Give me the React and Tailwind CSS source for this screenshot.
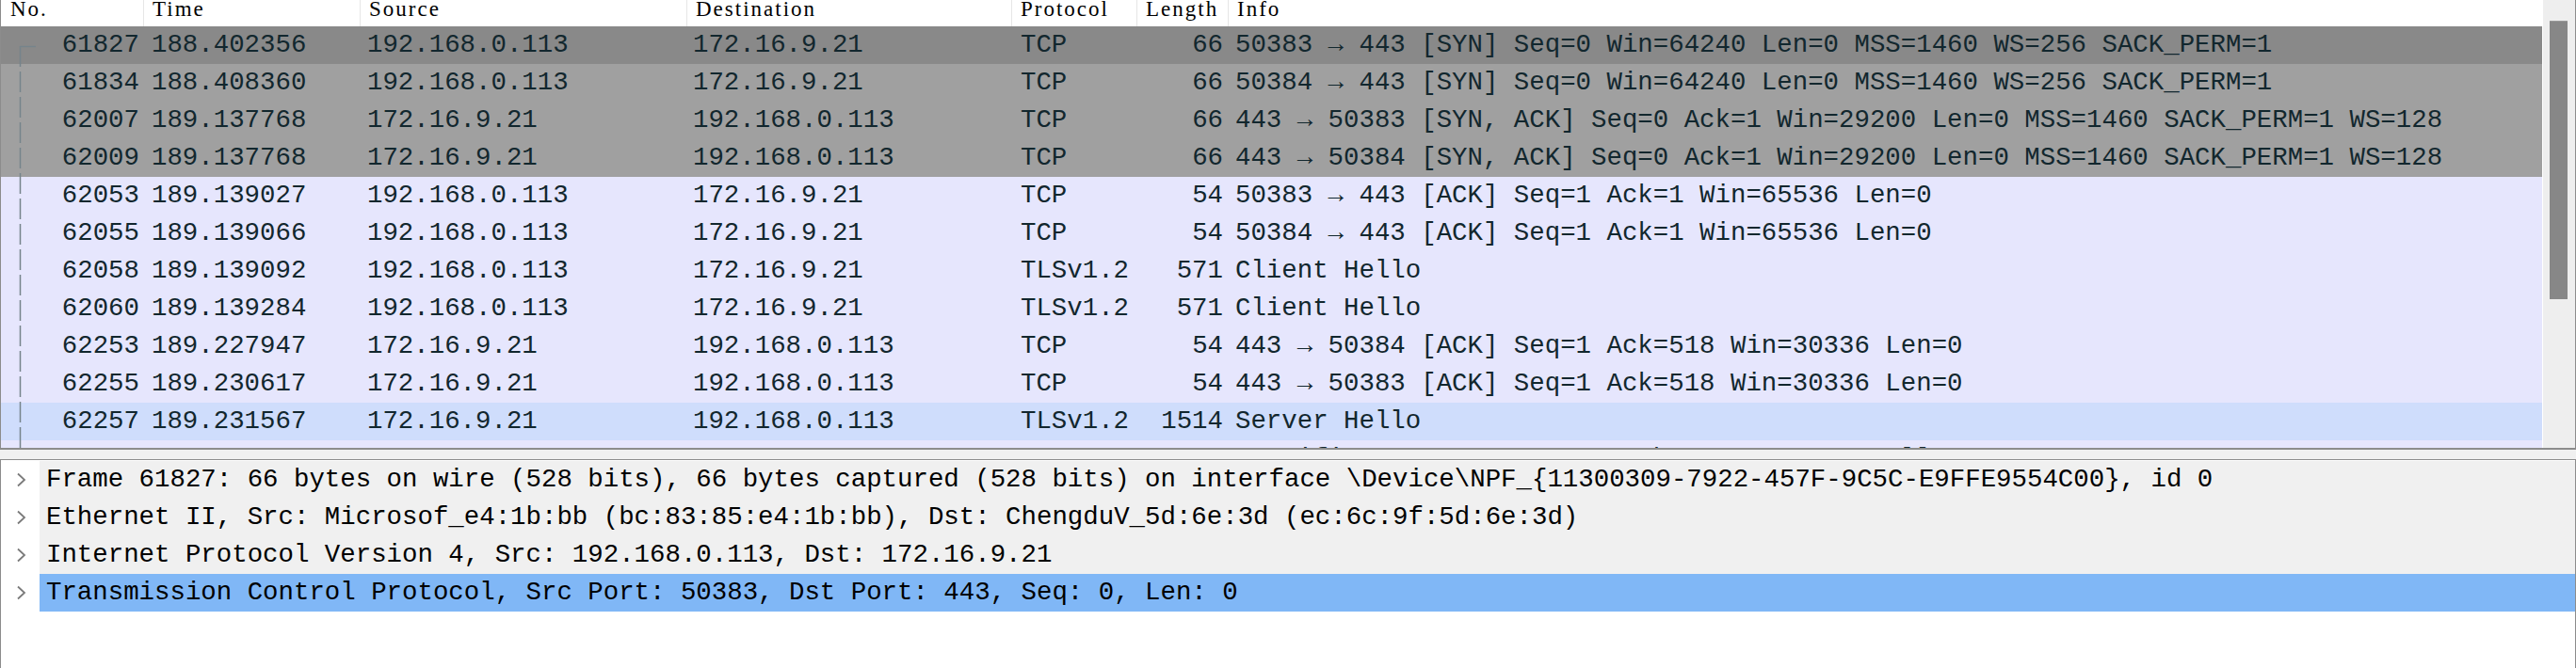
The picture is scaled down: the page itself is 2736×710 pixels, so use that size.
const MONO = "font-['Liberation_Mono',monospace] text-[27.4px]"
const SERIF = "font-['Liberation_Serif',serif] text-[23px] tracking-[2px]"

const PACKETS = [
  { no: '61827', time: '188.402356', src: '192.168.0.113', dst: '172.16.9.21', proto: 'TCP', len: '66', info: '50383 → 443 [SYN] Seq=0 Win=64240 Len=0 MSS=1460 WS=256 SACK_PERM=1', bg: 'bg-[#898989]' },
  { no: '61834', time: '188.408360', src: '192.168.0.113', dst: '172.16.9.21', proto: 'TCP', len: '66', info: '50384 → 443 [SYN] Seq=0 Win=64240 Len=0 MSS=1460 WS=256 SACK_PERM=1', bg: 'bg-[#a0a0a0]' },
  { no: '62007', time: '189.137768', src: '172.16.9.21', dst: '192.168.0.113', proto: 'TCP', len: '66', info: '443 → 50383 [SYN, ACK] Seq=0 Ack=1 Win=29200 Len=0 MSS=1460 SACK_PERM=1 WS=128', bg: 'bg-[#a0a0a0]' },
  { no: '62009', time: '189.137768', src: '172.16.9.21', dst: '192.168.0.113', proto: 'TCP', len: '66', info: '443 → 50384 [SYN, ACK] Seq=0 Ack=1 Win=29200 Len=0 MSS=1460 SACK_PERM=1 WS=128', bg: 'bg-[#a0a0a0]' },
  { no: '62053', time: '189.139027', src: '192.168.0.113', dst: '172.16.9.21', proto: 'TCP', len: '54', info: '50383 → 443 [ACK] Seq=1 Ack=1 Win=65536 Len=0', bg: 'bg-[#e6e6fd]' },
  { no: '62055', time: '189.139066', src: '192.168.0.113', dst: '172.16.9.21', proto: 'TCP', len: '54', info: '50384 → 443 [ACK] Seq=1 Ack=1 Win=65536 Len=0', bg: 'bg-[#e6e6fd]' },
  { no: '62058', time: '189.139092', src: '192.168.0.113', dst: '172.16.9.21', proto: 'TLSv1.2', len: '571', info: 'Client Hello', bg: 'bg-[#e6e6fd]' },
  { no: '62060', time: '189.139284', src: '192.168.0.113', dst: '172.16.9.21', proto: 'TLSv1.2', len: '571', info: 'Client Hello', bg: 'bg-[#e6e6fd]' },
  { no: '62253', time: '189.227947', src: '172.16.9.21', dst: '192.168.0.113', proto: 'TCP', len: '54', info: '443 → 50384 [ACK] Seq=1 Ack=518 Win=30336 Len=0', bg: 'bg-[#e6e6fd]' },
  { no: '62255', time: '189.230617', src: '172.16.9.21', dst: '192.168.0.113', proto: 'TCP', len: '54', info: '443 → 50383 [ACK] Seq=1 Ack=518 Win=30336 Len=0', bg: 'bg-[#e6e6fd]' },
  { no: '62257', time: '189.231567', src: '172.16.9.21', dst: '192.168.0.113', proto: 'TLSv1.2', len: '1514', info: 'Server Hello', bg: 'bg-[#cfddfc]' },
  { no: '62259', time: '189.231601', src: '172.16.9.21', dst: '192.168.0.113', proto: 'TLSv1.2', len: '1514', info: 'Certificate, Server Key Exchange, Server Hello Done', bg: 'bg-[#e6e6fd]' },
]

const DETAILS = [
  { text: 'Frame 61827: 66 bytes on wire (528 bits), 66 bytes captured (528 bits) on interface \\Device\\NPF_{11300309-7922-457F-9C5C-E9FFE9554C00}, id 0', bg: 'bg-[#f0f0f0]' },
  { text: 'Ethernet II, Src: Microsof_e4:1b:bb (bc:83:85:e4:1b:bb), Dst: ChengduV_5d:6e:3d (ec:6c:9f:5d:6e:3d)', bg: 'bg-[#f0f0f0]' },
  { text: 'Internet Protocol Version 4, Src: 192.168.0.113, Dst: 172.16.9.21', bg: 'bg-[#f0f0f0]' },
  { text: 'Transmission Control Protocol, Src Port: 50383, Dst Port: 443, Seq: 0, Len: 0', bg: 'bg-[#80b7f6]' },
]

function HeaderCell({ label, className }) {
  return (
    <div className={`shrink-0 h-full border-r border-[#e6e6e6] pl-[9px] leading-[20px] text-black ${className}`}>
      {label}
    </div>
  )
}

function PacketRow({ p }) {
  return (
    <div className={`flex h-[40px] shrink-0 leading-[40px] whitespace-nowrap text-[#12272e] ${p.bg}`}>
      <div className="w-[152px] shrink-0 pr-[5px] text-right">{p.no}</div>
      <div className="w-[230px] shrink-0 pl-[8px]">{p.time}</div>
      <div className="w-[347px] shrink-0 pl-[7px]">{p.src}</div>
      <div className="w-[345px] shrink-0 pl-[6px]">{p.dst}</div>
      <div className="w-[133px] shrink-0 pl-[9px]">{p.proto}</div>
      <div className="w-[97px] shrink-0 pr-[6px] text-right">{p.len}</div>
      <div className="flex-1 overflow-hidden pl-[7px]">{p.info}</div>
    </div>
  )
}

function DetailRow({ d }) {
  return (
    <div className="flex h-[40px] shrink-0">
      <div className="w-[41px] shrink-0 flex items-center pl-[16px] bg-white">
        <svg width="12" height="16" viewBox="0 0 12 16" fill="none">
          <path d="M2 1.5 L9 8 L2 14.5" stroke="#7a7a7a" strokeWidth="1.8" />
        </svg>
      </div>
      <div className={`flex-1 pl-[7px] leading-[40px] whitespace-nowrap overflow-hidden text-black ${d.bg}`}>
        {d.text}
      </div>
    </div>
  )
}

export default function App() {
  return (
    <div className={`w-[2736px] h-[710px] overflow-hidden bg-[#f0f0f0] flex flex-col ${MONO}`}>
      {/* packet list */}
      <div className="h-[478px] shrink-0 flex border-l border-r border-b-2 border-[#8c8c8c]">
        <div className="relative flex-1 flex flex-col overflow-hidden bg-white">
          <div className={`flex h-[28px] shrink-0 bg-white ${SERIF}`}>
            <HeaderCell label="No." className="w-[152px] pl-[10px]" />
            <HeaderCell label="Time" className="w-[230px]" />
            <HeaderCell label="Source" className="w-[347px]" />
            <HeaderCell label="Destination" className="w-[345px]" />
            <HeaderCell label="Protocol" className="w-[133px]" />
            <HeaderCell label="Length" className="w-[97px]" />
            <div className="flex-1 pl-[9px] leading-[20px] text-black">Info</div>
          </div>
          {PACKETS.map((p) => (
            <PacketRow key={p.no} p={p} />
          ))}
          <svg className="absolute left-0 top-0" width="40" height="478">
            <path d="M20.5 49.5 H37" stroke="#76848b" strokeWidth="1.5" />
            <path d="M20.5 49 V478" stroke="#76848b" strokeWidth="1.5" strokeDasharray="22 5" />
          </svg>
        </div>
        <div className="w-[35px] shrink-0 border-l border-white bg-[#eeeeee] pt-[22px] pl-[7px]">
          <div className="w-[19px] h-[296px] bg-[#878787] border-t border-[#9a9a9a]" />
        </div>
      </div>

      {/* splitter */}
      <div className="h-[10px] shrink-0 bg-[#f0f0f0]" />

      {/* packet details */}
      <div className="flex-1 flex flex-col border-t border-l border-r border-[#8c8c8c] bg-white pt-[1px]">
        {DETAILS.map((d, i) => (
          <DetailRow key={i} d={d} />
        ))}
      </div>
    </div>
  )
}
